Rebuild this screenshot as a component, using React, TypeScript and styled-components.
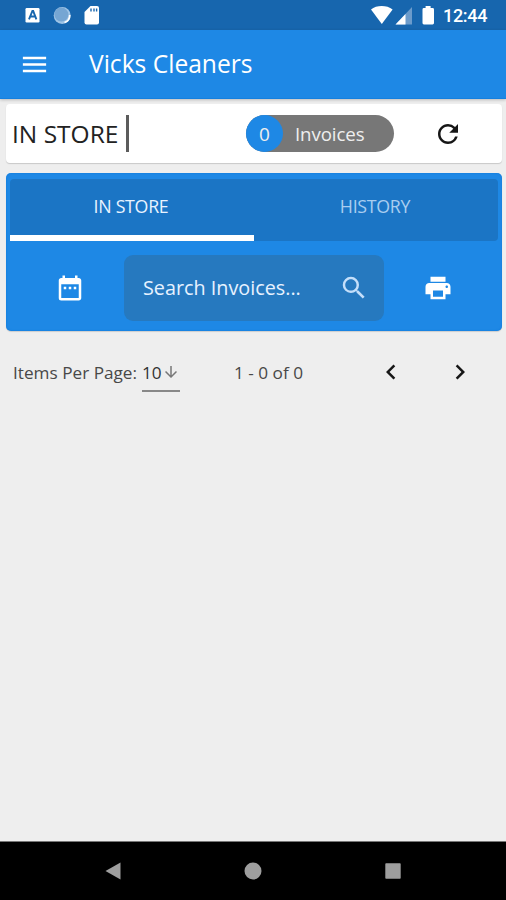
import React from "react";
import styled, { createGlobalStyle } from "styled-components";
import {
  MdMenu,
  MdRefresh,
  MdDateRange,
  MdSearch,
  MdPrint,
  MdChevronLeft,
  MdChevronRight,
  MdArrowDownward,
} from "react-icons/md";

const GlobalStyle = createGlobalStyle`
  * { box-sizing: border-box; }
  body {
    margin: 0;
    background: #eeeeee;
    font-family: "Open Sans", "Noto Sans", sans-serif;
  }
`;

const Screen = styled.div`
  display: flex;
  flex-direction: column;
  width: 506px;
  height: 900px;
  overflow: hidden;
  background: #eeeeee;
`;

const StatusBar = styled.div`
  display: flex;
  justify-content: space-between;
  flex: none;
  height: 30px;
  background: #1766ae;
  color: #fff;
`;

const StatusIcons = styled.svg`
  display: block;
  height: 30px;
`;

const StatusRight = styled.div`
  display: flex;
  padding-right: 18px;
`;

const Clock = styled.span`
  width: 45px;
  margin-left: 7px;
  font: 500 18px/32px Roboto, sans-serif;
  letter-spacing: -0.3px;
  white-space: nowrap;
`;

const AppBar = styled.header`
  display: flex;
  align-items: center;
  flex: none;
  height: 69px;
  padding: 1px 20px 0 19px;
  background: #1e88e5;
  border-bottom: 1px solid #1580df;
  box-shadow: 0 1px 3px rgba(0, 0, 0, 0.22);
  color: #fff;
`;

const Title = styled.h1`
  margin: 0 0 2px 39px;
  font-size: 24.6px;
  font-weight: 400;
  line-height: 32px;
`;

const Content = styled.main`
  flex: 1;
  padding: 5px 4px 0 6px;
`;

const SummaryCard = styled.section`
  display: flex;
  align-items: center;
  height: 59px;
  padding-left: 6px;
  margin-bottom: 10px;
  border-radius: 4px;
  background: #fff;
  box-shadow: 0 1px 1px rgba(0, 0, 0, 0.16);
`;

const Heading = styled.div`
  width: 114px;
  font-size: 24.5px;
  line-height: 32px;
  color: #222;
  white-space: nowrap;
`;

const Divider = styled.div`
  width: 3px;
  height: 37px;
  background: #5c5c5c;
`;

const Pill = styled.div`
  display: flex;
  align-items: center;
  width: 148px;
  height: 37px;
  margin: 0 39px 0 117px;
  border-radius: 19px;
  background: #777;
  color: #eee;
`;

const Count = styled.span`
  width: 37px;
  height: 37px;
  border-radius: 50%;
  background: #1e88e5;
  font-size: 19px;
  line-height: 38px;
  text-align: center;
`;

const PillLabel = styled.span`
  margin-left: 12px;
  font-size: 18.7px;
  line-height: 36px;
  letter-spacing: -0.1px;
`;

const Panel = styled.section`
  height: 158px;
  padding: 6px 4px 0;
  border-radius: 5px;
  background: #1e88e5;
  box-shadow: inset 0 0 2px #0876da, 0 1px 1px rgba(0, 0, 0, 0.14);
  color: #fff;
`;

const Tabs = styled.div`
  display: flex;
  height: 62px;
  border-radius: 4px;
  background: #1b75c5;
`;

const Tab = styled.button<{ $active?: boolean }>`
  flex: 1;
  padding: 0 2px ${({ $active }) => ($active ? 2 : 8)}px 0;
  border: 0;
  border-bottom: ${({ $active }) => ($active ? "6px solid #fff" : "0")};
  background: none;
  color: ${({ $active }) => ($active ? "#e8f3ff" : "#a9cdf0")};
  font: 400 17.8px/24px "Open Sans", sans-serif;
  letter-spacing: -0.3px;
`;

const ToolRow = styled.div`
  display: flex;
  align-items: center;
  height: 66px;
  margin-top: 14px;
`;

const ToolSlot = styled.div<{ $start: number; $width: number }>`
  width: ${({ $width }) => $width}px;
  padding-left: ${({ $start }) => $start}px;
  line-height: 0;
`;

const SearchBox = styled.div`
  display: flex;
  align-items: center;
  justify-content: space-between;
  width: 260px;
  height: 66px;
  padding: 0 15px 0 19px;
  border-radius: 9px;
  background: #2679bf;
  color: #e6f2ff;
  font-size: 19.8px;
  line-height: 28px;
`;

const Pager = styled.div`
  display: flex;
  align-items: center;
  height: 40px;
  margin-top: 21px;
  padding-left: 7px;
  color: #484848;
  font-size: 17.2px;
  white-space: nowrap;
`;

const PagerLabel = styled.span`
  width: 129px;
`;

const PageSize = styled.div`
  display: flex;
  align-items: center;
  width: 38px;
  height: 40px;
  padding-top: 2px;
  border-bottom: 2px solid #888;
  color: #333;
`;

const Range = styled.span`
  width: 144px;
  margin-left: 54px;
`;

const PageButton = styled.button`
  display: flex;
  align-items: center;
  justify-content: center;
  width: 69px;
  height: 40px;
  padding: 0;
  border: 0;
  background: none;
  color: #161616;
  &:first-of-type {
    margin-left: -22px;
  }
`;

const NavBar = styled.nav`
  display: flex;
  align-items: center;
  justify-content: center;
  gap: 122px;
  flex: none;
  height: 59px;
  border-top: 1px solid #777;
  background: #000;
`;

export default function App() {
  return (
    <Screen>
      <GlobalStyle />
      <StatusBar>
        <StatusIcons width="110" viewBox="0 0 110 30">
          <rect x="25.5" y="8" width="14" height="14.5" rx="1.2" fill="#fff" />
          <path d="M29 19.3 32.4 11h.8l3.2 8.3M30.4 16.5h5" fill="none" stroke="#1766ae" strokeWidth="1.9" />
          <circle cx="62.2" cy="15.4" r="8.5" fill="#9fc4e6" />
          <circle cx="61.4" cy="14.6" r="7" fill="#76a6d3" />
          <path d="M64.5 22.5a7.6 7.6 0 0 0 5.2-7.5" fill="none" stroke="#fff" strokeWidth="1.6" />
          <path d="M90.5 6H97a2 2 0 0 1 2 2v14.5a2 2 0 0 1-2 2H86.5a2 2 0 0 1-2-2V12z" fill="#fff" />
          <path d="M91 8.5v3M94 8.5v3M96.6 8.5v3" stroke="#1766ae" strokeWidth="1.4" />
        </StatusIcons>
        <StatusRight>
          <StatusIcons width="66" viewBox="370 0 66 30">
            <path d="M371 9.4C376.5 4.9 386.8 4.9 392.6 9.4L381.8 24z" fill="#fff" />
            <path d="M412 7v17.5h-16.5z" fill="#6b9bcb" />
            <path d="M405.5 14v10.5h-10z" fill="#fff" />
            <path d="M425.6 6h5v2h2a1.4 1.4 0 0 1 1.4 1.4v13.7a1.4 1.4 0 0 1-1.4 1.4h-8.7a1.4 1.4 0 0 1-1.4-1.4V9.4A1.4 1.4 0 0 1 423.9 8h1.7z" fill="#fff" />
          </StatusIcons>
          <Clock>12:44</Clock>
        </StatusRight>
      </StatusBar>
      <AppBar>
        <MdMenu size={31} />
        <Title>Vicks Cleaners</Title>
      </AppBar>
      <Content>
        <SummaryCard>
          <Heading>IN STORE</Heading>
          <Divider />
          <Pill>
            <Count>0</Count>
            <PillLabel>Invoices</PillLabel>
          </Pill>
          <MdRefresh size={30} color="#161616" />
        </SummaryCard>
        <Panel>
          <Tabs>
            <Tab $active>IN STORE</Tab>
            <Tab>HISTORY</Tab>
          </Tabs>
          <ToolRow>
            <ToolSlot $start={45} $width={114}>
              <MdDateRange size={30} />
            </ToolSlot>
            <SearchBox>
              Search Invoices...
              <MdSearch size={30} color="#c4dffa" />
            </SearchBox>
            <ToolSlot $start={39} $width={108}>
              <MdPrint size={30} />
            </ToolSlot>
          </ToolRow>
        </Panel>
        <Pager>
          <PagerLabel>Items Per Page:</PagerLabel>
          <PageSize>
            10
            <MdArrowDownward size={18} color="#777" />
          </PageSize>
          <Range>1 - 0 of 0</Range>
          <PageButton>
            <MdChevronLeft size={30} />
          </PageButton>
          <PageButton>
            <MdChevronRight size={30} />
          </PageButton>
        </Pager>
      </Content>
      <NavBar>
        <svg width="18" height="18" viewBox="0 0 18 18">
          <path d="M1.5 9 16.5 0.5v17z" fill="#9e9e9e" />
        </svg>
        <svg width="18" height="18" viewBox="0 0 18 18">
          <circle cx="9" cy="9" r="8.5" fill="#9e9e9e" />
        </svg>
        <svg width="18" height="18" viewBox="0 0 18 18">
          <rect x="1.3" y="1.3" width="15.4" height="15.4" rx="0.8" fill="#9e9e9e" />
        </svg>
      </NavBar>
    </Screen>
  );
}
